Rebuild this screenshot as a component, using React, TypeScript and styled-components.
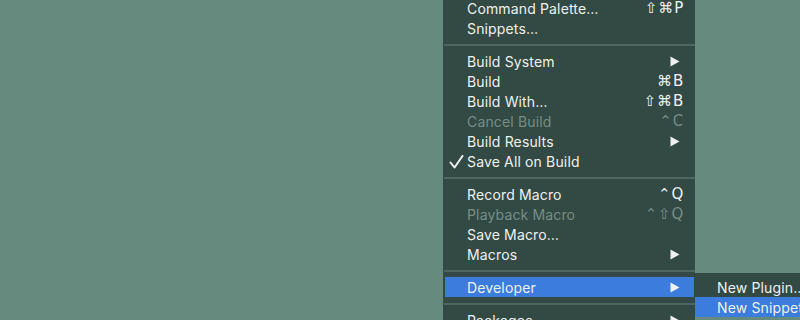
import styled, { createGlobalStyle } from "styled-components";

const Global = createGlobalStyle`
  html, body {
    margin: 0;
    padding: 0;
    background: #678a7e;
    overflow: hidden;
  }
  body {
    font-family: "Inter", "Noto Sans", "DejaVu Sans", sans-serif;
  }
`;

const Desktop = styled.div`
  width: 800px;
  height: 320px;
  display: flex;
  padding-left: 443px;
  box-sizing: border-box;
  overflow: hidden;
`;

const Menu = styled.div`
  width: 252px;
  margin-top: -2px;
  background: #324a43;
  display: flex;
  flex-direction: column;
  align-self: flex-start;
`;

const Row = styled.div<{ $active?: boolean; $disabled?: boolean }>`
  position: relative;
  height: 20px;
  display: flex;
  align-items: center;
  margin: 0 1px 0 2px;
  padding: 0 10px 0 22px;
  font-size: 14px;
  letter-spacing: 0.15px;
  color: ${(p) => (p.$disabled ? "#788c86" : "#eef1f0")};
  background: ${(p) => (p.$active ? "#3b7cdc" : "transparent")};
`;

const Check = styled.svg`
  position: absolute;
  left: 4px;
  top: 4px;
`;

const Label = styled.span`
  flex: 1;
  white-space: nowrap;
`;

const Shortcut = styled.span`
  font-family: "DejaVu Sans", sans-serif;
  font-size: 15px;
  letter-spacing: 0.8px;
`;

const Separator = styled.div`
  height: 2px;
  margin: 6px 0 5px 1px;
  background: #4e6660;
`;

const Arrow = () => (
  <svg width="10" height="11" viewBox="0 0 10 11" style={{ marginRight: "4px" }}>
    <polygon points="0.5,0.5 9.5,5.5 0.5,10.5" fill="currentColor" />
  </svg>
);

const Submenu = styled.div`
  position: absolute;
  left: calc(100% + 1px);
  top: -4px;
  width: 120px;
  padding-top: 4px;
  background: #324a43;
  display: flex;
  flex-direction: column;
`;

const SubRow = styled.div<{ $active?: boolean }>`
  height: 20px;
  display: flex;
  align-items: center;
  padding-left: 22px;
  font-size: 14px;
  letter-spacing: 0.15px;
  white-space: nowrap;
  color: #eef1f0;
  background: ${(p) => (p.$active ? "#3b7cdc" : "transparent")};
`;

type Item = {
  label: string;
  shortcut?: string;
  submenu?: boolean;
  disabled?: boolean;
  checked?: boolean;
};

const groups: Item[][] = [
  [
    { label: "Command Palette…", shortcut: "⇧⌘P" },
    { label: "Snippets…" },
  ],
  [
    { label: "Build System", submenu: true },
    { label: "Build", shortcut: "⌘B" },
    { label: "Build With…", shortcut: "⇧⌘B" },
    { label: "Cancel Build", shortcut: "⌃C", disabled: true },
    { label: "Build Results", submenu: true },
    { label: "Save All on Build", checked: true },
  ],
  [
    { label: "Record Macro", shortcut: "⌃Q" },
    { label: "Playback Macro", shortcut: "⌃⇧Q", disabled: true },
    { label: "Save Macro…" },
    { label: "Macros", submenu: true },
  ],
];

const MenuRow = ({ item }: { item: Item }) => (
  <Row $disabled={item.disabled}>
    {item.checked && (
      <Check width="15" height="14" viewBox="0 0 15 14">
        <polyline
          points="1.5,7.5 5.5,12.5 13.5,1"
          fill="none"
          stroke="currentColor"
          strokeWidth="2"
          strokeLinecap="round"
          strokeLinejoin="round"
        />
      </Check>
    )}
    <Label>{item.label}</Label>
    {item.shortcut && <Shortcut>{item.shortcut}</Shortcut>}
    {item.submenu && <Arrow />}
  </Row>
);

const App = () => {
  return (
    <>
      <Global />
      <Desktop>
        <Menu>
          {groups.map((g, i) => (
            <div key={i}>
              {g.map((item) => (
                <MenuRow key={item.label} item={item} />
              ))}
              <Separator />
            </div>
          ))}
          <Row $active>
            <Label>Developer</Label>
            <Arrow />
            <Submenu>
              <SubRow>New Plugin…</SubRow>
              <SubRow $active>New Snippet…</SubRow>
            </Submenu>
          </Row>
          <Separator />
          <Row>
            <Label>Packages</Label>
            <Arrow />
          </Row>
        </Menu>
      </Desktop>
    </>
  );
};

export default App;
